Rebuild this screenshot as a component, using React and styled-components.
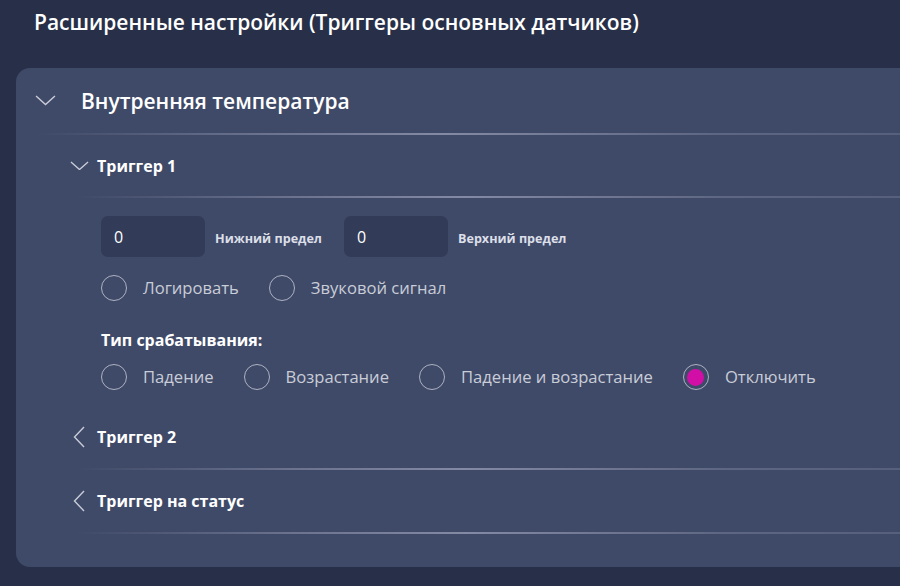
import React, { useState } from 'react';
import styled, { createGlobalStyle } from 'styled-components';

const GlobalStyle = createGlobalStyle`
  html, body {
    margin: 0;
    padding: 0;
    background: #282f48;
    overflow: hidden;
  }
  body {
    font-family: "Open Sans", "Noto Sans", sans-serif;
    color: #ffffff;
  }
`;

const Page = styled.div`
  width: 900px;
  height: 586px;
  padding: 7px 0 0 16px;
  box-sizing: border-box;
`;

const Title = styled.h1`
  margin: 0 0 0 18px;
  height: 61px;
  font-size: 21px;
  font-weight: 600;
  line-height: 30px;
  color: #ffffff;
`;

const Panel = styled.div`
  background: #3f4a68;
  border-radius: 14px;
  margin-right: -40px;
  padding-bottom: 33px;
`;

const Divider = styled.div`
  height: 2px;
  margin-left: ${(p) => p.$indent || 0}px;
  background: linear-gradient(
    90deg,
    rgba(150, 155, 180, 0) 0%,
    rgba(150, 155, 180, 0.5) 25%,
    rgba(170, 172, 195, 0.65) 45%,
    rgba(150, 155, 180, 0.35) 75%,
    rgba(150, 155, 180, 0.25) 100%
  );
`;

const SectionHead = styled.div`
  height: 65px;
  display: flex;
  align-items: center;
  padding-left: 19px;
  gap: 25px;
  font-size: 21px;
  line-height: 28px;
  font-weight: 600;
`;

const TriggerHead = styled.div`
  height: ${(p) => p.$h || 62}px;
  display: flex;
  align-items: center;
  padding-left: ${(p) => (p.$open ? 54 : 57)}px;
  gap: ${(p) => (p.$open ? 8 : 12)}px;
  font-size: 16px;
  line-height: 22px;
  font-weight: 700;
`;

const Chevron = styled.svg`
  flex: none;
  stroke: #c9ccd8;
  fill: none;
  stroke-width: 1.4;
`;

const Body = styled.div`
  padding: 18px 0 16px 85px;
  display: flex;
  flex-direction: column;
`;

const InputRow = styled.div`
  display: flex;
  align-items: center;
`;

const NumberInput = styled.input`
  width: 104px;
  height: 41px;
  box-sizing: border-box;
  border: none;
  border-radius: 7px;
  background: #323b57;
  color: #ffffff;
  font-family: inherit;
  font-size: 16px;
  padding: 0 13px;
  outline: none;
`;

const InputLabel = styled.span`
  font-size: 12.6px;
  font-weight: 700;
  color: #dcdfe8;
  margin: 3px 22px 0 10px;
`;

const RadioRow = styled.div`
  display: flex;
  align-items: center;
  height: 26px;
  margin-top: ${(p) => p.$mt || 0}px;
`;

const RadioItem = styled.label`
  display: flex;
  align-items: center;
  gap: 16px;
  margin-right: ${(p) => p.$mr}px;
  font-size: 16.6px;
  line-height: 22px;
  color: #c9cdd8;
  cursor: pointer;
`;

const RadioCircle = styled.span`
  width: 26px;
  height: 26px;
  box-sizing: border-box;
  border-radius: 50%;
  border: 1.5px solid #aeb2c2;
  display: flex;
  align-items: center;
  justify-content: center;
  &::after {
    content: '';
    width: 17px;
    height: 17px;
    border-radius: 50%;
    background: ${(p) => (p.$checked ? '#d10fa7' : 'transparent')};
  }
`;

const GroupLabel = styled.div`
  margin-top: 29px;
  font-size: 16px;
  font-weight: 700;
  line-height: 20px;
  color: #ffffff;
`;

const Down = ({ size = 20 }) => (
  <Chevron width={size} height={size / 2} viewBox="0 0 20 10">
    <path d="M1 1 L10 9 L19 1" />
  </Chevron>
);

const Left = () => (
  <Chevron width="12" height="22" viewBox="0 0 12 22">
    <path d="M11 1 L1.5 11 L11 21" />
  </Chevron>
);

const Radio = ({ label, checked, mr, onClick }) => (
  <RadioItem $mr={mr} onClick={onClick}>
    <RadioCircle $checked={checked} />
    {label}
  </RadioItem>
);

const types = [
  { label: 'Падение', mr: 30 },
  { label: 'Возрастание', mr: 30 },
  { label: 'Падение и возрастание', mr: 30 },
  { label: 'Отключить', mr: 0 },
];

const App = () => {
  const [type, setType] = useState('Отключить');
  const [flags, setFlags] = useState({ log: false, sound: false });

  return (
    <>
      <GlobalStyle />
      <Page>
        <Title>Расширенные настройки (Триггеры основных датчиков)</Title>
        <Panel>
          <SectionHead>
            <Down size={21} />
            Внутренняя температура
          </SectionHead>
          <Divider $indent={20} />

          <TriggerHead $open $h={61}>
            <Down size={19} />
            Триггер 1
          </TriggerHead>
          <Divider $indent={60} />
          <Body>
            <InputRow>
              <NumberInput defaultValue="0" />
              <InputLabel>Нижний предел</InputLabel>
              <NumberInput defaultValue="0" />
              <InputLabel>Верхний предел</InputLabel>
            </InputRow>
            <RadioRow $mt={18}>
              <Radio
                label="Логировать"
                mr={30}
                checked={flags.log}
                onClick={() => setFlags({ ...flags, log: !flags.log })}
              />
              <Radio
                label="Звуковой сигнал"
                mr={0}
                checked={flags.sound}
                onClick={() => setFlags({ ...flags, sound: !flags.sound })}
              />
            </RadioRow>
            <GroupLabel>Тип срабатывания:</GroupLabel>
            <RadioRow $mt={14}>
              {types.map((t) => (
                <Radio
                  key={t.label}
                  label={t.label}
                  mr={t.mr}
                  checked={type === t.label}
                  onClick={() => setType(t.label)}
                />
              ))}
            </RadioRow>
          </Body>

          <TriggerHead $h={62}>
            <Left />
            Триггер 2
          </TriggerHead>
          <Divider $indent={60} />
          <TriggerHead $h={62}>
            <Left />
            Триггер на статус
          </TriggerHead>
          <Divider $indent={60} />
        </Panel>
      </Page>
    </>
  );
};

export default App;
